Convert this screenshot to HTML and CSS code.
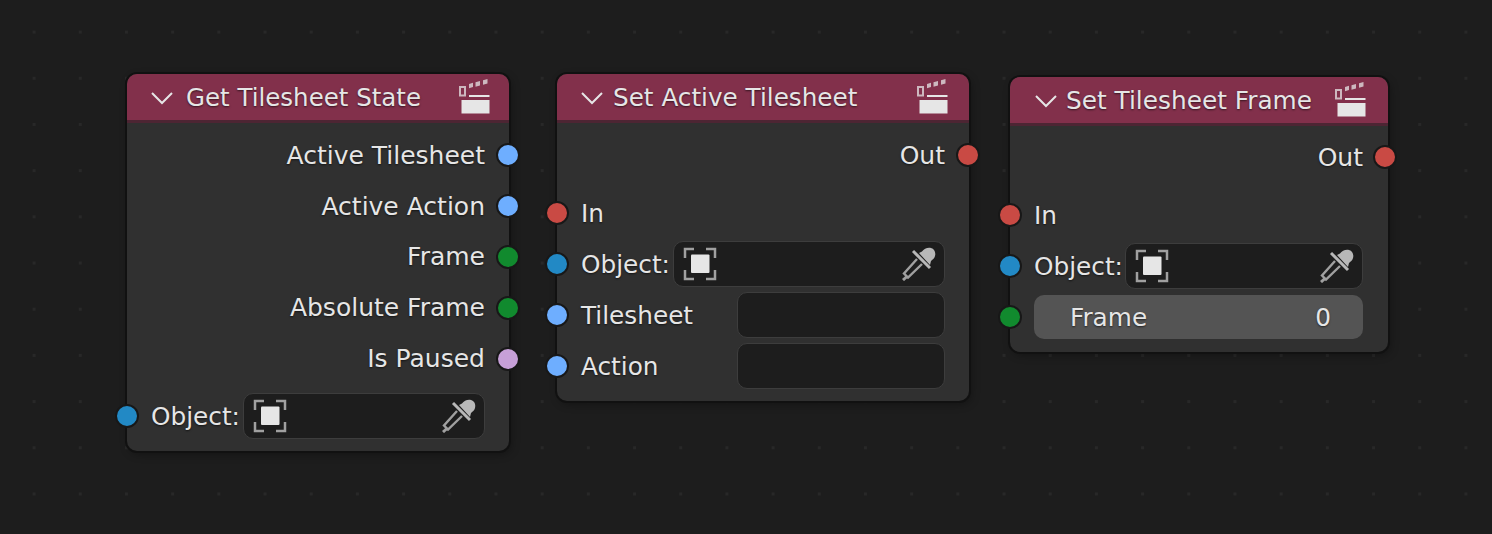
FILE: index.html
```html
<!DOCTYPE html>
<html lang="en">
<head>
  <meta charset="UTF-8" />
  <title>Tilesheet Nodes</title>
  <link rel="stylesheet" href="styles.css">
</head>
<body>
  <svg class="icon-defs" width="0" height="0">
    <symbol id="clapboard" viewBox="0 0 32 36">
      <g fill="#e6e6e6">
        <rect x="2.500" y="21" width="28" height="13.500" />
        <rect x="10" y="16" width="20.500" height="2" />
      </g>
      <g fill="#e6e6e6" opacity="0.75">
        <path d="M0 7h7v10.500H0z M2 9v6.500h3V9z" fill-rule="evenodd" />
        <path d="M10 5l4-1.200V8l-4 1.200z" />
        <path d="M16.500 3.200l4.500-1.200v4.500l-4.500 1.200z" />
        <path d="M24 1.200l4.500-1.200v4.500l-4.500 1.200z" />
      </g>
    </symbol>
    <symbol id="select" viewBox="0 0 34 34">
      <path d="M2 11V2h9 M23 2h9v9 M2 23v9h9 M23 32h9v-9" fill="none" stroke="#a0a0a0" stroke-width="2.500" />
      <rect x="8" y="7.500" width="18.500" height="18.500" rx="1" fill="#e6e6e6" />
    </symbol>
    <symbol id="dropper" viewBox="0 0 34 34">
      <path d="M11 4L28 21" stroke="#b8b8b8" stroke-width="3" fill="none" />
      <path d="M17 6l3-1.500c2-2.500 5.500-4.500 9-3.500 3.500 1 5 4.500 4 8-.5 2-2 3.500-4 5L28 18z" fill="#b8b8b8" />
      <path d="M15 12L2 26.500l4 4L20 17" stroke="#a0a0a0" stroke-width="2.400" fill="none" />
      <path d="M1 33l4.500-4" stroke="#a0a0a0" stroke-width="3" fill="none" />
    </symbol>
  </svg>

  <section class="node node-state">
    <header class="node-header">
      <svg class="chevron" viewBox="0 0 24 14"><path d="M2 2l10 10L22 2" /></svg>
      <span class="node-title">Get Tilesheet State</span>
      <svg class="clapboard"><use href="#clapboard" /></svg>
    </header>
    <div class="node-body">
      <div class="row row-out"><span>Active Tilesheet</span><i class="socket out sock-tilesheet"></i></div>
      <div class="row row-out"><span>Active Action</span><i class="socket out sock-tilesheet"></i></div>
      <div class="row row-out"><span>Frame</span><i class="socket out sock-int"></i></div>
      <div class="row row-out"><span>Absolute Frame</span><i class="socket out sock-int"></i></div>
      <div class="row row-out"><span>Is Paused</span><i class="socket out sock-bool"></i></div>
      <div class="row row-in spaced">
        <i class="socket in sock-object"></i>
        <span class="object-label">Object:</span>
        <div class="field object-field">
          <svg class="select-icon"><use href="#select" /></svg>
          <svg class="dropper-icon"><use href="#dropper" /></svg>
        </div>
      </div>
    </div>
  </section>

  <section class="node node-active">
    <header class="node-header">
      <svg class="chevron" viewBox="0 0 24 14"><path d="M2 2l10 10L22 2" /></svg>
      <span class="node-title">Set Active Tilesheet</span>
      <svg class="clapboard"><use href="#clapboard" /></svg>
    </header>
    <div class="node-body">
      <div class="row row-out"><span>Out</span><i class="socket out sock-flow"></i></div>
      <div class="row row-in spaced"><i class="socket in sock-flow"></i><span>In</span></div>
      <div class="row row-in">
        <i class="socket in sock-object"></i>
        <span class="object-label">Object:</span>
        <div class="field object-field">
          <svg class="select-icon"><use href="#select" /></svg>
          <svg class="dropper-icon"><use href="#dropper" /></svg>
        </div>
      </div>
      <div class="row row-in">
        <i class="socket in sock-tilesheet"></i>
        <span class="prop-label">Tilesheet</span>
        <div class="field"></div>
      </div>
      <div class="row row-in">
        <i class="socket in sock-tilesheet"></i>
        <span class="prop-label">Action</span>
        <div class="field"></div>
      </div>
    </div>
  </section>

  <section class="node node-frame">
    <header class="node-header">
      <svg class="chevron" viewBox="0 0 24 14"><path d="M2 2l10 10L22 2" /></svg>
      <span class="node-title">Set Tilesheet Frame</span>
      <svg class="clapboard"><use href="#clapboard" /></svg>
    </header>
    <div class="node-body">
      <div class="row row-out"><span>Out</span><i class="socket out sock-flow"></i></div>
      <div class="row row-in spaced"><i class="socket in sock-flow"></i><span>In</span></div>
      <div class="row row-in">
        <i class="socket in sock-object"></i>
        <span class="object-label">Object:</span>
        <div class="field object-field">
          <svg class="select-icon"><use href="#select" /></svg>
          <svg class="dropper-icon"><use href="#dropper" /></svg>
        </div>
      </div>
      <div class="row row-in">
        <i class="socket in sock-int"></i>
        <div class="number-field"><span>Frame</span><span>0</span></div>
      </div>
    </div>
  </section>
</body>
</html>
```

FILE: styles.css
```css
/* Basic reset & canvas */
* {
  margin: 0;
  padding: 0;
  box-sizing: border-box;
}

body {
  width: 1492px;
  height: 534px;
  position: relative;
  overflow: hidden;
  background-color: #1d1d1d;
  background-image: radial-gradient(circle at center, #282828 1.4px, transparent 1.8px);
  background-size: 46.2px 46.2px;
  background-position: 11px 9px;
  color: #e6e6e6;
  font-family: "DejaVu Sans", sans-serif;
  font-size: 24.750px;
  text-shadow: 0 1px 2px rgba(0, 0, 0, 0.6);
}

.icon-defs {
  position: absolute;
}

/* Nodes sit at free spots on the canvas */
.node {
  position: absolute;
  background-color: #303030;
  border-radius: 10px;
  box-shadow: 0 0 0 2px #111111, 2px 3px 8px rgba(0, 0, 0, 0.35);
}
.node-state {
  left: 127px;
  top: 74px;
  width: 382px;
  height: 377px;
}
.node-active {
  left: 557px;
  top: 74px;
  width: 412px;
  height: 327px;
}
.node-frame {
  left: 1010px;
  top: 77px;
  width: 378px;
  height: 275px;
}

/* Header */
.node-header {
  height: 49px;
  display: flex;
  align-items: center;
  padding-right: 18px;
  background-color: #82304b;
  border-bottom: 3px solid #4d2533;
  border-radius: 10px 10px 0 0;
}
.node-active .node-header {
  padding-right: 20px;
}
.node-frame .node-header {
  padding-right: 21px;
}
.node-title {
  flex: 1;
  font-size: 24.500px;
  white-space: nowrap;
}
.node-active .node-title {
  margin-left: -3px;
  font-size: 24.700px;
}
.node-frame .node-title {
  margin-left: -4px;
  font-size: 24.800px;
}
.chevron {
  width: 24px;
  height: 14px;
  margin: 2px 12px 0 23px;
  fill: none;
  stroke: #e6e6e6;
  stroke-width: 2;
}
.node-frame .chevron {
  margin-left: 24px;
}
.clapboard {
  width: 32px;
  height: 36px;
  flex: none;
}

/* Rows */
.node-body {
  padding: 7px 24px 0;
}
.node-frame .node-body {
  padding: 6px 25px 0 24px;
}
.row {
  position: relative;
  height: 50.800px;
  display: flex;
  align-items: center;
  white-space: nowrap;
}
.row-out {
  justify-content: flex-end;
  font-size: 25px;
}
.spaced {
  margin-top: 7px;
}
.object-label {
  width: 92px;
  flex: none;
  padding-top: 1px;
}
.node-frame .object-label {
  width: 91px;
}
.prop-label {
  width: 156px;
  flex: none;
  padding-top: 1px;
}

/* Sockets straddle the node edge */
.socket {
  position: absolute;
  top: 50%;
  width: 24px;
  height: 24px;
  margin-top: -12px;
  border: 2px solid #181818;
  border-radius: 50%;
}
.socket.out {
  right: -35px;
}
.node-frame .socket.out {
  right: -34px;
}
.socket.in {
  left: -36px;
}
.sock-tilesheet { background-color: #6eaeff; }
.sock-int { background-color: #118a2e; }
.sock-bool { background-color: #c7a0d8; }
.sock-object { background-color: #2289c5; }
.sock-flow { background-color: #c94a44; }

/* Input fields */
.field {
  flex: 1;
  height: 46px;
  position: relative;
  display: flex;
  align-items: center;
  justify-content: space-between;
  padding: 0 8px 0 9px;
  background-color: #1d1d1d;
  border: 1px solid #3d3d3d;
  border-radius: 10px;
}
.select-icon {
  width: 34px;
  height: 34px;
}
.dropper-icon {
  width: 34px;
  height: 34px;
}
.number-field {
  flex: 1;
  height: 44px;
  display: flex;
  align-items: center;
  justify-content: space-between;
  padding: 1px 32px 0 36px;
  background-color: #545454;
  border-radius: 10px;
}
```
